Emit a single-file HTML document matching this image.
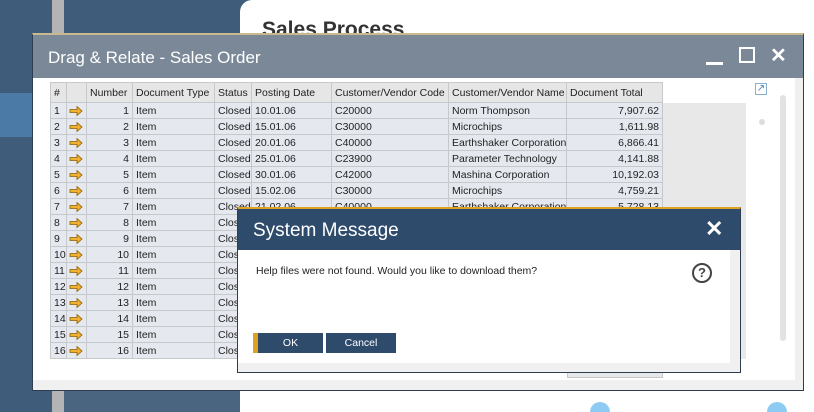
<!DOCTYPE html>
<html><head><meta charset="utf-8"><style>
*{margin:0;padding:0;box-sizing:border-box}
html{width:814px;height:412px;overflow:hidden}
body{width:814px;height:412px;overflow:hidden;position:relative;background:#3f5c7a;font-family:"Liberation Sans",sans-serif}
.abs{position:absolute}
table{border-collapse:collapse;font-size:10.5px;color:#222;font-family:"Liberation Sans",sans-serif}
td,th{border:1px solid #c6c9cc;height:16px;padding:0 3px;white-space:nowrap;font-weight:normal;text-align:left;overflow:hidden}
th{background:#e6e6e6;height:20px}
td{background:#e5e9ef}
td.r{text-align:right}
td.a{padding:0 0 0 2px;line-height:0}
</style></head><body>
<div class="abs" style="left:52px;top:0;width:12px;height:412px;background:#b4b4b4"></div>
<div class="abs" style="left:0;top:93px;width:32px;height:44px;background:#4b7aa6"></div>
<div class="abs" style="left:64px;top:380px;width:176px;height:32px;background:#4a6580"></div>
<div class="abs" style="left:240px;top:0;width:574px;height:412px;background:#fff;border-top-left-radius:12px;overflow:hidden">
 <div class="abs" style="left:350px;top:402px;width:20px;height:20px;border-radius:50%;background:#8ecbf2"></div>
 <div class="abs" style="left:527px;top:402px;width:20px;height:20px;border-radius:50%;background:#8ecbf2"></div>
</div>
<div class="abs" style="left:262px;top:18px;font-size:21px;font-weight:bold;color:#333">Sales Process</div>

<!-- main window -->
<div class="abs" style="left:32px;top:33px;width:772px;height:358px;background:#fff;border:1px solid #2c3e50;border-top:2px solid #c9b98c">
 <div style="height:43px;background:#7a8898;color:#fff;font-size:17px;padding:13px 0 0 15px">Drag &amp; Relate - Sales Order</div>
 <div class="abs" style="left:673px;top:27px;width:17px;height:3px;background:#fff"></div>
 <div class="abs" style="left:706px;top:12px;width:16px;height:16px;border:2px solid #fff"></div>
 <div class="abs" style="left:737px;top:8px;color:#fff;font-size:20px;font-weight:bold">✕</div>
 <div class="abs" style="left:0;top:345px;width:770px;height:10px;background:#f0f0f0"></div>
 <div class="abs" style="left:762px;top:43px;width:8px;height:312px;background:#f0f0f0"></div>
 <div class="abs" style="left:630px;top:68px;width:83px;height:256px;background:#e8e8e8"></div>
 <div class="abs" style="left:534px;top:324px;width:96px;height:19px;background:#e6e8ea;border:1px solid #c6c9cc"></div>
 <div class="abs" style="left:747px;top:60px;width:6px;height:246px;background:#e2e2e2;border-radius:3px"></div>
 <div class="abs" style="left:726px;top:84px;width:6px;height:6px;background:#ddd;border-radius:50%"></div>
 <div class="abs" style="left:722px;top:48px;width:12px;height:12px;border:1px solid #8ab0d0;color:#4a7fb0;font-size:10px;line-height:10px;text-align:center">↗</div>
</div>
<svg width="0" height="0" style="position:absolute"><defs><g id="ar"><path d="M1 4.5H8V1.5L13 6L8 10.5V7.5H1Z" fill="#f0b030" stroke="#8a6000" stroke-width="0.8"/></g></defs></svg>
<table class="abs" style="left:50px;top:82px;width:612px;table-layout:fixed">
<colgroup><col style="width:16px"><col style="width:20px"><col style="width:46px"><col style="width:82px"><col style="width:37px"><col style="width:80px"><col style="width:117px"><col style="width:118px"><col style="width:96px"></colgroup>
<tr><th>#</th><th></th><th>Number</th><th>Document Type</th><th>Status</th><th>Posting Date</th><th>Customer/Vendor Code</th><th>Customer/Vendor Name</th><th>Document Total</th></tr>
<tr><td>1</td><td class="a"><svg width="14" height="12"><use href="#ar"/></svg></td><td class="r">1</td><td>Item</td><td>Closed</td><td>10.01.06</td><td>C20000</td><td>Norm Thompson</td><td class="r">7,907.62</td></tr>
<tr><td>2</td><td class="a"><svg width="14" height="12"><use href="#ar"/></svg></td><td class="r">2</td><td>Item</td><td>Closed</td><td>15.01.06</td><td>C30000</td><td>Microchips</td><td class="r">1,611.98</td></tr>
<tr><td>3</td><td class="a"><svg width="14" height="12"><use href="#ar"/></svg></td><td class="r">3</td><td>Item</td><td>Closed</td><td>20.01.06</td><td>C40000</td><td>Earthshaker Corporation</td><td class="r">6,866.41</td></tr>
<tr><td>4</td><td class="a"><svg width="14" height="12"><use href="#ar"/></svg></td><td class="r">4</td><td>Item</td><td>Closed</td><td>25.01.06</td><td>C23900</td><td>Parameter Technology</td><td class="r">4,141.88</td></tr>
<tr><td>5</td><td class="a"><svg width="14" height="12"><use href="#ar"/></svg></td><td class="r">5</td><td>Item</td><td>Closed</td><td>30.01.06</td><td>C42000</td><td>Mashina Corporation</td><td class="r">10,192.03</td></tr>
<tr><td>6</td><td class="a"><svg width="14" height="12"><use href="#ar"/></svg></td><td class="r">6</td><td>Item</td><td>Closed</td><td>15.02.06</td><td>C30000</td><td>Microchips</td><td class="r">4,759.21</td></tr>
<tr><td>7</td><td class="a"><svg width="14" height="12"><use href="#ar"/></svg></td><td class="r">7</td><td>Item</td><td>Closed</td><td>21.02.06</td><td>C40000</td><td>Earthshaker Corporation</td><td class="r">5,728.13</td></tr>
<tr><td>8</td><td class="a"><svg width="14" height="12"><use href="#ar"/></svg></td><td class="r">8</td><td>Item</td><td>Closed</td><td></td><td></td><td></td><td></td></tr>
<tr><td>9</td><td class="a"><svg width="14" height="12"><use href="#ar"/></svg></td><td class="r">9</td><td>Item</td><td>Closed</td><td></td><td></td><td></td><td></td></tr>
<tr><td>10</td><td class="a"><svg width="14" height="12"><use href="#ar"/></svg></td><td class="r">10</td><td>Item</td><td>Closed</td><td></td><td></td><td></td><td></td></tr>
<tr><td>11</td><td class="a"><svg width="14" height="12"><use href="#ar"/></svg></td><td class="r">11</td><td>Item</td><td>Closed</td><td></td><td></td><td></td><td></td></tr>
<tr><td>12</td><td class="a"><svg width="14" height="12"><use href="#ar"/></svg></td><td class="r">12</td><td>Item</td><td>Closed</td><td></td><td></td><td></td><td></td></tr>
<tr><td>13</td><td class="a"><svg width="14" height="12"><use href="#ar"/></svg></td><td class="r">13</td><td>Item</td><td>Closed</td><td></td><td></td><td></td><td></td></tr>
<tr><td>14</td><td class="a"><svg width="14" height="12"><use href="#ar"/></svg></td><td class="r">14</td><td>Item</td><td>Closed</td><td></td><td></td><td></td><td></td></tr>
<tr><td>15</td><td class="a"><svg width="14" height="12"><use href="#ar"/></svg></td><td class="r">15</td><td>Item</td><td>Closed</td><td></td><td></td><td></td><td></td></tr>
<tr><td>16</td><td class="a"><svg width="14" height="12"><use href="#ar"/></svg></td><td class="r">16</td><td>Item</td><td>Closed</td><td></td><td></td><td></td><td></td></tr>
</table>

<!-- dialog -->
<div class="abs" style="left:237px;top:207px;width:504px;height:166px;background:#fff;border:1px solid #2c3e50;border-top:2px solid #e0a020">
 <div style="height:41px;background:#2e4b6b;color:#fff;font-size:19px;padding:11px 0 0 15px">System Message</div>
 <div class="abs" style="left:467px;top:7px;color:#fff;font-size:22px;font-weight:bold">✕</div>
 <div class="abs" style="left:18px;top:56px;font-size:10.5px;color:#222">Help files were not found. Would you like to download them?</div>
 <div class="abs" style="left:454px;top:54px;width:20px;height:20px;border:2px solid #444;border-radius:50%;font-size:13px;font-weight:bold;color:#444;text-align:center;line-height:16px">?</div>
 <div class="abs" style="left:15px;top:124px;width:70px;height:20px;background:#2e4b6b;border-left:5px solid #e0a020;color:#fff;font-size:10.5px;text-align:center;line-height:20px">OK</div>
 <div class="abs" style="left:88px;top:124px;width:70px;height:20px;background:#2e4b6b;color:#fff;font-size:10.5px;text-align:center;line-height:20px">Cancel</div>
 <div class="abs" style="left:0;top:154px;width:502px;height:9px;background:#f0f0f0"></div>
 <div class="abs" style="left:492px;top:41px;width:10px;height:122px;background:#f0f0f0"></div>
</div>
</body></html>
